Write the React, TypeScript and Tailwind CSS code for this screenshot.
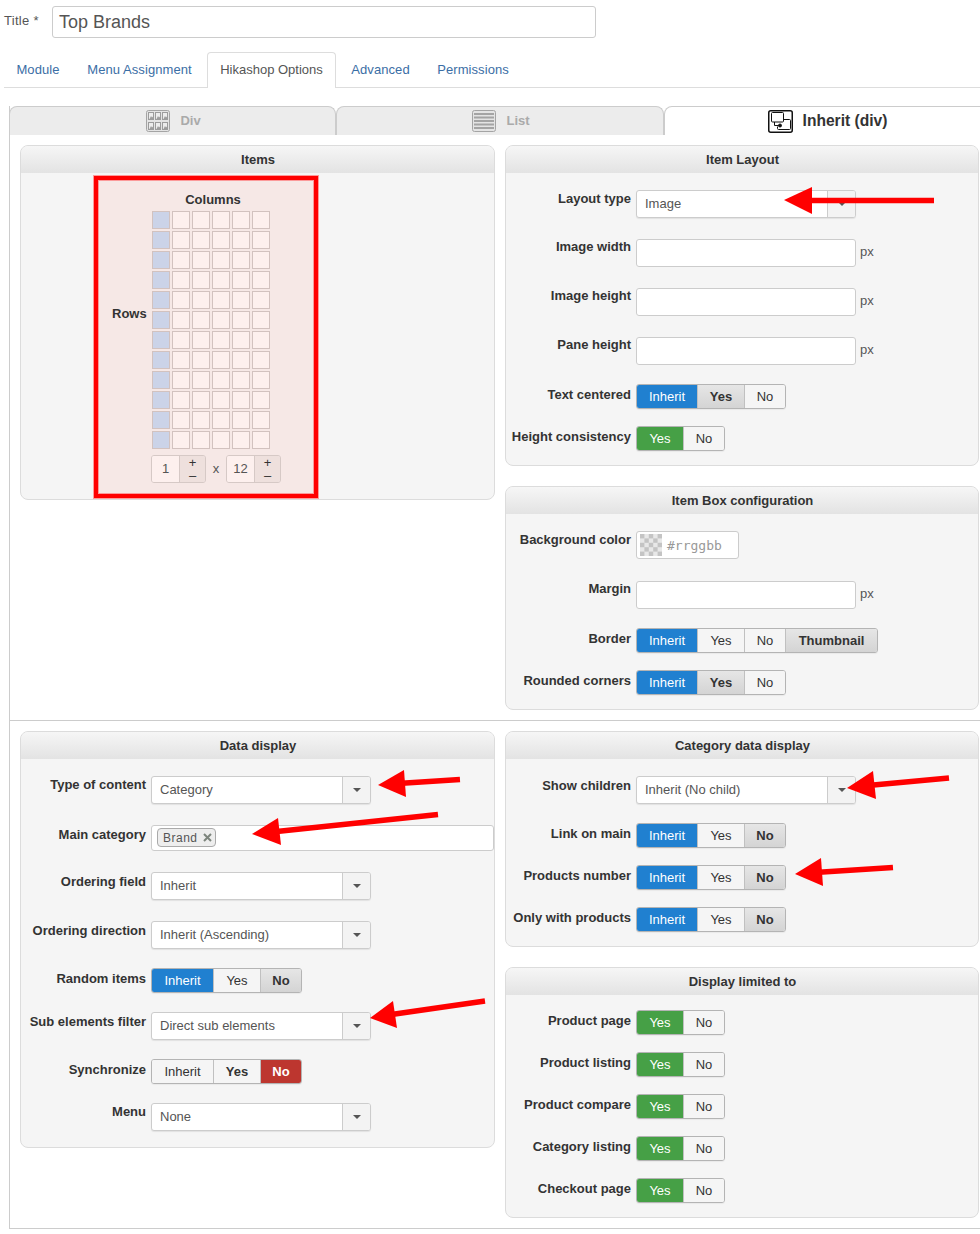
import React from "react";

type Tone = "off" | "offBold" | "grey" | "blue" | "green" | "red";
type Opt = { label: string; w: string; tone?: Tone };

const toneClass: Record<Tone, string> = {
  off: "bg-[#f5f5f5] text-[#333]",
  offBold: "bg-[#f5f5f5] text-[#333] font-bold",
  grey: "bg-gradient-to-b from-[#e6e6e6] to-[#d4d4d4] text-[#333] font-bold",
  blue: "bg-[#2080d0] text-white",
  green: "bg-[#46a046] text-white",
  red: "bg-[#bd362f] text-white font-bold",
};

const Toggle: React.FC<{ options: Opt[] }> = ({ options }) => (
  <div className="flex h-[25px] w-fit rounded-[3px] border border-[#b4b4b4] overflow-hidden text-[13px] shadow-[0_1px_1px_rgba(0,0,0,0.05)]">
    {options.map((o, i) => (
      <div
        key={o.label}
        className={`flex items-center justify-center ${o.w} ${toneClass[o.tone ?? "off"]} ${i > 0 ? "border-l border-[#c0c0c0]" : ""}`}
      >
        {o.label}
      </div>
    ))}
  </div>
);

// the left column's groups come out a pixel wider than the right column's
const inheritYesNo = (active: "Yes" | "No", inheritW = "w-[60px]"): Opt[] => [
  { label: "Inherit", w: inheritW, tone: "blue" },
  { label: "Yes", w: "w-[47px]", tone: active === "Yes" ? "grey" : "off" },
  { label: "No", w: "w-[41px]", tone: active === "No" ? "grey" : "off" },
];

const yesNo: Opt[] = [
  { label: "Yes", w: "w-[46px]", tone: "green" },
  { label: "No", w: "w-[41px]" },
];

const Select: React.FC<{ value: string }> = ({ value }) => (
  <div className="flex h-[28px] w-[220px] rounded-[3px] border border-[#ccc] bg-white overflow-hidden shadow-[0_1px_1px_rgba(0,0,0,0.08)]">
    <div className="flex-1 pl-2 leading-[26px] text-[13px] text-[#555]">{value}</div>
    <div className="flex w-[28px] items-center justify-center border-l border-[#ccc] bg-[#f3f3f3]">
      <div className="h-0 w-0 border-x-[4px] border-t-[4px] border-x-transparent border-t-[#555]" />
    </div>
  </div>
);

const PxInput: React.FC = () => (
  <div className="flex items-center">
    <div className="h-[28px] w-[220px] rounded-[3px] border border-[#ccc] bg-white" />
    <span className="ml-1 pb-[3px] text-[13px] leading-4 text-[#555]">px</span>
  </div>
);

const Row: React.FC<{ label: string; className?: string; labelClass?: string; children: React.ReactNode }> = ({
  label,
  className = "",
  labelClass = "",
  children,
}) => (
  <div className={`flex ${className}`}>
    <div className={`w-[130px] shrink-0 pr-[5px] text-right text-[13px] font-bold leading-[18px] text-[#333] ${labelClass}`}>
      {label}
    </div>
    {children}
  </div>
);

const Panel: React.FC<{ title: string; className?: string; bodyClass?: string; children: React.ReactNode }> = ({
  title,
  className = "",
  bodyClass = "pt-[17px] pb-[14px]",
  children,
}) => (
  <div className={`rounded-[8px] border border-[#dcdcdc] bg-[#f5f5f5] overflow-hidden ${className}`}>
    <div className="h-[27px] bg-gradient-to-b from-[#f6f6f6] to-[#e3e3e3] pl-px text-center text-[13px] font-bold leading-[28px] text-[#333]">
      {title}
    </div>
    <div className={bodyClass}>{children}</div>
  </div>
);

const Spinner: React.FC<{ value: string }> = ({ value }) => (
  <div className="flex h-[28px] w-[55px] rounded-[3px] border border-[#d6c9c6] overflow-hidden">
    <div className="w-[27px] bg-[#fdf0ee] text-center text-[13px] leading-[26px] text-[#555]">{value}</div>
    <div className="flex flex-1 flex-col items-center justify-center border-l border-[#d6c9c6] bg-[#eee0dd] text-[#333]">
      <span className="text-[13px] leading-[13px]">+</span>
      <span className="text-[13px] leading-[13px]">–</span>
    </div>
  </div>
);

const ItemsGrid: React.FC = () => (
  <div className="ml-[73px] mt-[3px] mb-px flex h-[322px] w-[224px] border-4 border-[#ff0000] bg-[#f6e8e6] pl-[14px] shadow-[0_0_0_1px_#ff9a9a,inset_0_0_0_1px_#fb9a9a]">
    <div className="mt-[126px] w-[34px] text-[13px] font-bold leading-4 text-[#333]">Rows</div>
    <div className="ml-[6px]">
      <div className="mt-[12px] h-[16px] w-[122px] text-center text-[13px] font-bold leading-4 text-[#333]">Columns</div>
      <div className="mt-[3px] grid grid-cols-[repeat(6,18px)] gap-[2px]">
        {Array.from({ length: 72 }).map((_, i) => (
          <div
            key={i}
            className={`h-[18px] w-[18px] border border-[#d2c2bf] ${i % 6 === 0 ? "bg-[#cbd3e8]" : "bg-[#fdf0ee]"}`}
          />
        ))}
      </div>
      <div className="-ml-px mt-[6px] flex items-center">
        <Spinner value="1" />
        <span className="w-[20px] text-center text-[13px] text-[#555]">x</span>
        <Spinner value="12" />
      </div>
    </div>
  </div>
);

const DivIcon = () => (
  <svg width="24" height="22" viewBox="0 0 24 22">
    <rect x="0.5" y="0.5" width="23" height="21" rx="2" fill="#e4e4e4" stroke="#a4a4a4" />
    {[2.5, 9.5, 16.5].map((x) =>
      [2.5, 12.5].map((y) => (
        <g key={`${x}-${y}`}>
          <rect x={x} y={y} width="5" height="7" fill="#ececec" stroke="#9c9c9c" />
          <path d={`M${x + 1} ${y + 6.5} l1.5 -3 l1 1.5 l1 -1 v2.5 z`} fill="#9c9c9c" />
        </g>
      )),
    )}
  </svg>
);

const ListIcon = () => (
  <svg width="24" height="22" viewBox="0 0 24 22">
    <rect x="0.5" y="0.5" width="23" height="21" rx="2" fill="#e4e4e4" stroke="#a4a4a4" />
    {[3, 6.5, 10, 13.5, 17].map((y) => (
      <rect key={y} x="2" y={y} width="20" height="2" fill="#a4a4a4" />
    ))}
  </svg>
);

const InheritIcon = () => (
  <svg width="25" height="23" viewBox="0 0 25 23" fill="none" stroke="#111">
    <rect x="0.75" y="0.75" width="23.5" height="21.5" rx="2" strokeWidth="1.5" />
    <rect x="3.5" y="2.5" width="12" height="9.5" rx="1" />
    <path d="M15.5 9.5h6a1 1 0 0 1 1 1v8a1 1 0 0 1-1 1h-11a1 1 0 0 1-1-1v-2" />
    <path d="M6.5 12v3.5h5" />
    <circle cx="12" cy="15.5" r="1.5" fill="#111" />
  </svg>
);

const Arrow: React.FC<{ tip: string; top: string; bottom: string; x1: number; y1: number; x2: number; y2: number }> = ({
  tip,
  top,
  bottom,
  x1,
  y1,
  x2,
  y2,
}) => (
  <g>
    <line x1={x1} y1={y1} x2={x2} y2={y2} stroke="#ff0000" strokeWidth="5.5" />
    <polygon points={`${tip} ${top} ${bottom}`} fill="#ff0000" />
  </g>
);

const Arrows: React.FC = () => (
  <svg className="absolute left-0 top-0 pointer-events-none" width="980" height="1234">
    <Arrow tip="784,200" top="812,187" bottom="812,214" x1={934} y1={200.5} x2={805} y2={200.5} />
    <Arrow tip="378,785" top="404,770" bottom="406,797" x1={460} y1={779.5} x2={398} y2={783.5} />
    <Arrow tip="252,834" top="278,818" bottom="281,845" x1={438} y1={814.5} x2={272} y2={832} />
    <Arrow tip="847,788" top="873,771" bottom="876,799" x1={949} y1={778} x2={868} y2={785.5} />
    <Arrow tip="795,874" top="821,858" bottom="823,886" x1={893} y1={867.5} x2={815} y2={872.5} />
    <Arrow tip="370,1018" top="393,1001" bottom="397,1028" x1={485} y1={1001} x2={388} y2={1015} />
  </svg>
);

const NavTab: React.FC<{ label: string; className: string; active?: boolean }> = ({ label, className, active }) =>
  active ? (
    <div className={`mr-[2px] h-[36px] rounded-t-[4px] border border-b-0 border-[#ddd] bg-white text-center text-[13px] leading-[34px] text-[#555] ${className}`}>
      {label}
    </div>
  ) : (
    <div className={`mr-[2px] h-[35px] text-center text-[13px] leading-[35px] tracking-[0.08px] text-[#3b6ea5] ${className}`}>{label}</div>
  );

const App: React.FC = () => {
  return (
    <div className="relative h-[1234px] w-[980px] overflow-hidden bg-white font-['Liberation_Sans',Arial,sans-serif]">
      <div className="flex pl-1 pt-[6px]">
        <div className="w-[48px] pt-[7px] text-[13px] leading-4 tracking-[0.3px] text-[#555]">Title *</div>
        <div className="h-[32px] w-[544px] rounded-[3px] border border-[#ccc] pl-[6px] text-[18px] leading-[30px] text-[#555]">
          Top Brands
        </div>
      </div>

      <div className="ml-1 mt-[14px] flex h-[36px] border-b border-[#ddd]">
        <NavTab label="Module" className="w-[68px]" />
        <NavTab label="Menu Assignment" className="w-[131px]" />
        <NavTab label="Hikashop Options" className="w-[129px]" active />
        <NavTab label="Advanced" className="w-[85px]" />
        <NavTab label="Permissions" className="w-[96px]" />
      </div>

      <div className="ml-[9px] mt-[18px] h-[1123px] border-b border-l border-[#ccc]">
        <div className="-ml-px flex h-[29px]">
          <div className="flex w-[327px] shrink-0 items-center justify-center gap-[10px] rounded-t-[8px] border border-b-0 border-[#ccc] bg-[#ececec] pl-[2px] text-[13px] font-bold text-[#aaa]">
            <DivIcon />
            Div
          </div>
          <div className="flex w-[328px] shrink-0 items-center justify-center gap-[10px] rounded-t-[8px] border border-b-0 border-[#ccc] bg-[#ececec] pl-[2px] text-[13px] font-bold text-[#aaa]">
            <ListIcon />
            List
          </div>
          <div className="flex w-[327px] shrink-0 items-center justify-center gap-[10px] rounded-t-[8px] border border-b-0 border-[#ccc] bg-white text-[15.6px] font-bold text-[#333]">
            <InheritIcon />
            Inherit (div)
          </div>
        </div>

        <div className="flex h-[586px] gap-[10px] border-b border-[#ccc] pl-[10px] pt-[10px]">
          <div className="w-[475px]">
            <Panel title="Items" bodyClass="pb-0">
              <ItemsGrid />
            </Panel>
          </div>
          <div className="flex w-[474px] flex-col gap-[20px]">
            <Panel title="Item Layout">
              <Row label="Layout type" className="mb-[21px]"><Select value="Image" /></Row>
              <Row label="Image width" className="mb-[21px]" labelClass="-mt-px"><PxInput /></Row>
              <Row label="Image height" className="mb-[21px]" labelClass="-mt-px"><PxInput /></Row>
              <Row label="Pane height" className="mb-[19px]" labelClass="-mt-px"><PxInput /></Row>
              <Row label="Text centered" className="mb-[17px]" labelClass="pt-[2px]"><Toggle options={inheritYesNo("Yes")} /></Row>
              <Row label="Height consistency" labelClass="pt-[2px]"><Toggle options={yesNo} /></Row>
            </Panel>
            <Panel title="Item Box configuration">
              <Row label="Background color" className="mb-[22px]">
                <div className="flex h-[28px] w-[103px] items-center rounded-[3px] border border-[#ccc] bg-white pl-[3px]">
                  <svg width="22" height="22" viewBox="0 0 22 22">
                    <rect width="22" height="22" rx="2" fill="#e8e8e8" />
                    {[0, 1, 2, 3, 4].map((r) =>
                      [0, 1, 2, 3, 4].map((c) =>
                        (r + c) % 2 === 0 ? (
                          <rect key={`${r}-${c}`} x={c * 4.4} y={r * 4.4} width="4.4" height="4.4" fill="#c4c4c4" />
                        ) : null,
                      ),
                    )}
                  </svg>
                  <span className="ml-[5px] pt-px font-['DejaVu_Sans_Mono',monospace] text-[13px] text-[#999]">#rrggbb</span>
                </div>
              </Row>
              <Row label="Margin" className="mb-[19px]" labelClass="-mt-px"><PxInput /></Row>
              <Row label="Border" className="mb-[17px]" labelClass="pt-[2px]">
                <Toggle
                  options={[
                    { label: "Inherit", w: "w-[60px]", tone: "blue" },
                    { label: "Yes", w: "w-[47px]" },
                    { label: "No", w: "w-[41px]" },
                    { label: "Thumbnail", w: "w-[92px]", tone: "grey" },
                  ]}
                />
              </Row>
              <Row label="Rounded corners" labelClass="pt-[2px]"><Toggle options={inheritYesNo("Yes")} /></Row>
            </Panel>
          </div>
        </div>

        <div className="flex gap-[10px] pl-[10px] pt-[10px]">
          <div className="w-[475px]">
            <Panel title="Data display" bodyClass="pt-[17px] pb-[16px]">
              <Row label="Type of content" className="mb-[21px]"><Select value="Category" /></Row>
              <Row label="Main category" className="mb-[21px]" labelClass="pt-px">
                <div className="h-[26px] w-[343px] rounded-[3px] border border-[#ccc] bg-white pl-[5px] pt-[2px]">
                  <div className="flex h-[19px] w-[59px] items-center rounded-[4px] border border-[#aaa] bg-[#eee] pl-[5px] text-[12px] tracking-[0.5px] text-[#555]">
                    Brand
                    <svg className="ml-[5px]" width="9" height="9" viewBox="0 0 9 9" stroke="#7d857d" strokeWidth="2">
                      <path d="M1 1 8 8M8 1 1 8" />
                    </svg>
                  </div>
                </div>
              </Row>
              <Row label="Ordering field" className="mb-[21px]" labelClass="pt-px"><Select value="Inherit" /></Row>
              <Row label="Ordering direction" className="mb-[19px]" labelClass="pt-px"><Select value="Inherit (Ascending)" /></Row>
              <Row label="Random items" className="mb-[19px]" labelClass="pt-[2px]"><Toggle options={inheritYesNo("No", "w-[61px]")} /></Row>
              <Row label="Sub elements filter" className="mb-[19px]" labelClass="pt-px"><Select value="Direct sub elements" /></Row>
              <Row label="Synchronize" className="mb-[19px]" labelClass="pt-[2px]">
                <Toggle
                  options={[
                    { label: "Inherit", w: "w-[61px]" },
                    { label: "Yes", w: "w-[47px]", tone: "offBold" },
                    { label: "No", w: "w-[41px]", tone: "red" },
                  ]}
                />
              </Row>
              <Row label="Menu"><Select value="None" /></Row>
            </Panel>
          </div>
          <div className="flex w-[474px] flex-col gap-[20px]">
            <Panel title="Category data display">
              <Row label="Show children" className="mb-[19px]" labelClass="pt-px"><Select value="Inherit (No child)" /></Row>
              <Row label="Link on main" className="mb-[17px]" labelClass="pt-[2px]"><Toggle options={inheritYesNo("No")} /></Row>
              <Row label="Products number" className="mb-[17px]" labelClass="pt-[2px]"><Toggle options={inheritYesNo("No")} /></Row>
              <Row label="Only with products" labelClass="pt-[2px]"><Toggle options={inheritYesNo("No")} /></Row>
            </Panel>
            <Panel title="Display limited to" bodyClass="pt-[15px] pb-[14px]">
              <Row label="Product page" className="mb-[17px]" labelClass="pt-[2px]"><Toggle options={yesNo} /></Row>
              <Row label="Product listing" className="mb-[17px]" labelClass="pt-[2px]"><Toggle options={yesNo} /></Row>
              <Row label="Product compare" className="mb-[17px]" labelClass="pt-[2px]"><Toggle options={yesNo} /></Row>
              <Row label="Category listing" className="mb-[17px]" labelClass="pt-[2px]"><Toggle options={yesNo} /></Row>
              <Row label="Checkout page" labelClass="pt-[2px]"><Toggle options={yesNo} /></Row>
            </Panel>
          </div>
        </div>
      </div>

      <Arrows />
    </div>
  );
};

export default App;
